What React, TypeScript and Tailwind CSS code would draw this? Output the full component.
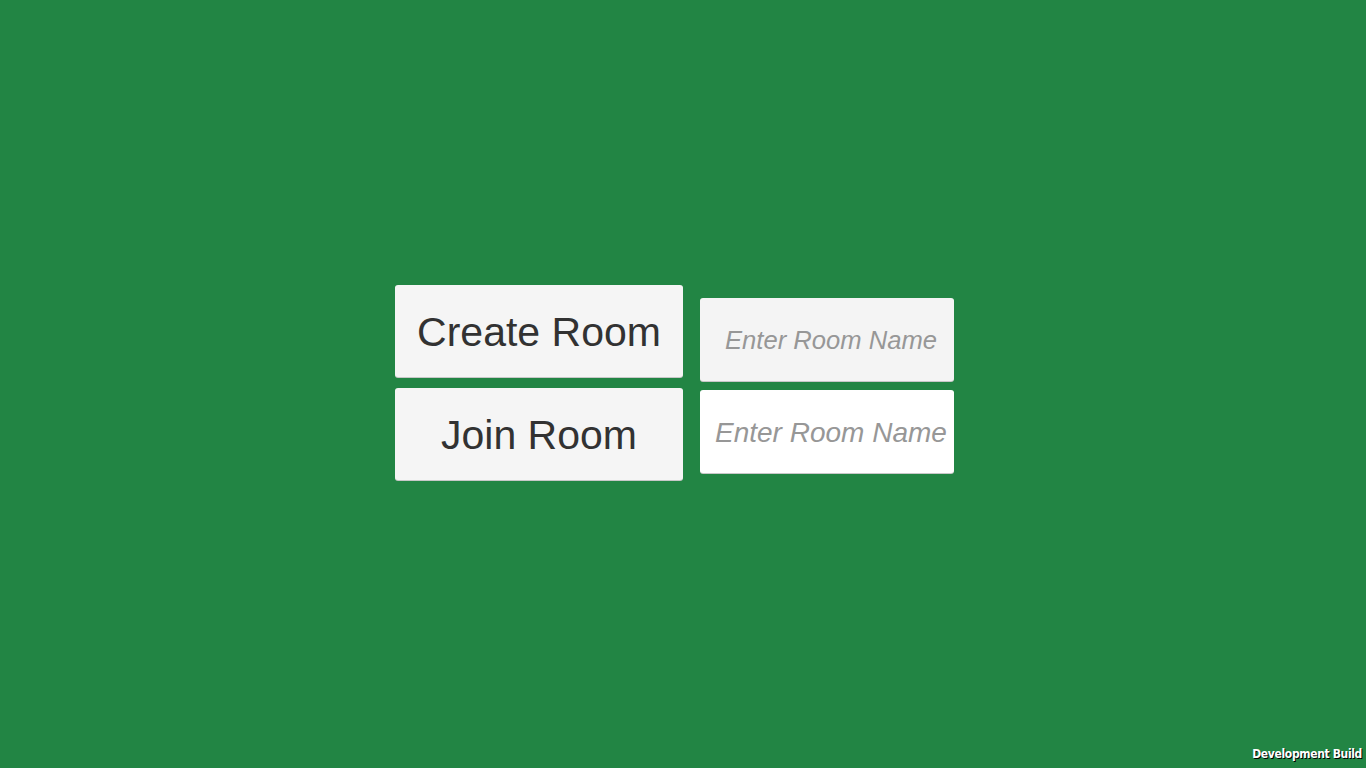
export default function App() {
  return (
    <div className="relative w-full h-screen overflow-hidden bg-[#228544] font-['Liberation_Sans',Arial,sans-serif]">
      <div className="flex items-start gap-[17px] pl-[395px] pt-[285px]">
        <div className="flex flex-col gap-[11px]">
          <button className="w-[288px] h-[92px] rounded-[3px] bg-[#f5f5f5] shadow-[0_1px_0_#c8c8c8] pt-[3px] text-[41px] text-[#323232] flex items-center justify-center">
            Create Room
          </button>
          <button className="w-[288px] h-[92px] rounded-[3px] bg-[#f5f5f5] shadow-[0_1px_0_#c8c8c8] pt-[3px] text-[41px] text-[#323232] flex items-center justify-center">
            Join Room
          </button>
        </div>
        <div className="flex flex-col gap-[9px] mt-[13px]">
          <input
            placeholder="Enter Room Name"
            className="w-[254px] h-[83px] rounded-[3px] bg-[#f4f4f4] shadow-[0_1px_0_#c8c8c8] pl-[25px] pt-[2px] text-[25.6px] italic outline-none placeholder:text-[#979797] text-[#323232]"
          />
          <input
            placeholder="Enter Room Name"
            className="w-[254px] h-[83px] rounded-[3px] bg-white shadow-[0_1px_0_#c8c8c8] pl-[15px] pr-0 pt-[2px] text-[28px] italic outline-none placeholder:text-[#979797] text-[#323232]"
          />
        </div>
      </div>
      <div className="absolute right-[4px] bottom-[8px] text-[12px] font-bold text-white tracking-[-0.35px] [text-shadow:1px_1px_0_#000] font-['DejaVu_Sans_Condensed','DejaVu_Sans',sans-serif] leading-none">
        Development Build
      </div>
    </div>
  );
}
